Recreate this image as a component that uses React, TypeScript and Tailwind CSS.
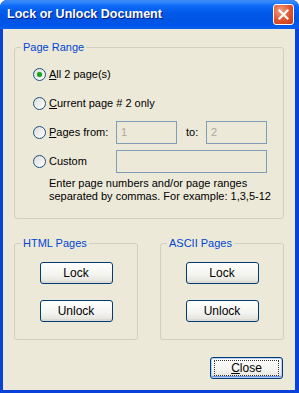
import type { ReactNode } from 'react';

const font = { fontFamily: '"Liberation Sans", Arial, sans-serif' };

function Radio({ checked }: { checked?: boolean }) {
  return (
    <span className="flex h-[13px] w-[13px] shrink-0 items-center justify-center rounded-full border border-[#1C5180] bg-[linear-gradient(135deg,#dcdcd7,#ffffff)]">
      {checked && <span className="h-[5px] w-[5px] rounded-full bg-[#21A121] shadow-[0_0_1px_#55d055]" />}
    </span>
  );
}

function Group({ title, className, children }: { title: string; className?: string; children: ReactNode }) {
  return (
    <div className={`flex flex-col rounded-[3px] border border-[#D0D0BF] ${className ?? ''}`}>
      <span className="-mt-[7px] -mb-[6px] ml-[6px] self-start bg-[#ECE9D8] px-[2px] text-[11px] leading-[13px] text-[#0046D5]">
        {title}
      </span>
      {children}
    </div>
  );
}

function Button({ children, isDefault }: { children: ReactNode; isDefault?: boolean }) {
  return (
    <button
      className={`flex h-[22px] w-[73px] items-center justify-center rounded-[3px] border border-[#003C74] bg-[linear-gradient(to_bottom,#ffffff,#f3f3ef_60%,#e2e1da)] text-[12px] text-black ${
        isDefault ? 'shadow-[inset_0_0_0_1px_#b7cef6,inset_0_-1px_0_1px_#6f94e0]' : 'shadow-[inset_0_-2px_0_#dedcd2]'
      }`}
    >
      {isDefault ? (
        <span className="flex h-[16px] w-[65px] items-center justify-center border border-dotted border-[#333]">
          {children}
        </span>
      ) : (
        children
      )}
    </button>
  );
}

function Input({ value, w }: { value?: string; w: string }) {
  return (
    <div className={`flex h-[23px] ${w} items-center border border-[#7F9DB9] bg-[#ECE9D8] pl-[4px] text-[11px] text-[#ACA899]`}>
      {value}
    </div>
  );
}

export default function App() {
  return (
    <div className="h-[393px] w-[299px] bg-white" style={font}>
      <div className="flex h-full flex-col rounded-t-[7px] bg-[#0842D8]">
        <div className="flex h-[29px] shrink-0 items-center justify-between rounded-t-[7px] bg-[linear-gradient(to_bottom,#3d8cf5_0%,#2f86fb_8%,#0d6af7_20%,#0058e8_45%,#0054e3_70%,#0056ea_88%,#0a5ff0_100%)] pl-[7px] pr-[5px]">
          <span className="text-[12.5px] font-bold text-white [text-shadow:1px_1px_#0a1883]">Lock or Unlock Document</span>
          <span className="flex h-[21px] w-[21px] items-center justify-center rounded-[3px] border border-white bg-[radial-gradient(circle_at_35%_30%,#f0a080,#e0522e_55%,#c2391a)]">
            <svg width="11" height="11" viewBox="0 0 11 11">
              <path d="M1.5 1.5 L9.5 9.5 M9.5 1.5 L1.5 9.5" stroke="white" strokeWidth="2.2" strokeLinecap="square" />
            </svg>
          </span>
        </div>
        <div className="mb-[3px] ml-[3px] mr-[4px] flex flex-1 flex-col bg-[#ECE9D8] text-[11px] leading-[13px] text-black">
          <Group title="Page Range" className="mx-[11px] mt-[18px] h-[172px]">
            <div className="mt-[15px] flex flex-col gap-[6px] pl-[18px]">
              <div className="flex h-[23px] items-center gap-[3px]">
                <Radio checked />
                <span>
                  <u>A</u>ll 2 page(s)
                </span>
              </div>
              <div className="flex h-[23px] items-center gap-[3px]">
                <Radio />
                <span>
                  <u>C</u>urrent page # 2 only
                </span>
              </div>
              <div className="flex h-[23px] items-center">
                <div className="flex w-[83px] items-center gap-[3px]">
                  <Radio />
                  <span>
                    <u>P</u>ages from:
                  </span>
                </div>
                <Input value="1" w="w-[61px]" />
                <span className="ml-[9px] w-[20px]">to:</span>
                <Input value="2" w="w-[61px]" />
              </div>
              <div className="flex h-[23px] items-center">
                <div className="flex w-[83px] items-center gap-[3px]">
                  <Radio />
                  <span>Custom</span>
                </div>
                <Input w="w-[151px]" />
              </div>
            </div>
            <p className="ml-[34px] mt-[4px]">
              Enter page numbers and/or page ranges
              <br />
              separated by commas. For example: 1,3,5-12
            </p>
          </Group>
          <div className="mx-[11px] mt-[24px] flex justify-between">
            <Group title="HTML Pages" className="h-[97px] w-[124px] items-center">
              <div className="mt-[18px] flex flex-col gap-[16px]">
                <Button>Lock</Button>
                <Button>Unlock</Button>
              </div>
            </Group>
            <Group title="ASCII Pages" className="h-[97px] w-[124px] items-center">
              <div className="mt-[18px] flex flex-col gap-[16px]">
                <Button>Lock</Button>
                <Button>Unlock</Button>
              </div>
            </Group>
          </div>
          <div className="mr-[12px] mt-[17px] flex justify-end">
            <Button isDefault>
              <span>
                <u>C</u>lose
              </span>
            </Button>
          </div>
        </div>
      </div>
    </div>
  );
}
